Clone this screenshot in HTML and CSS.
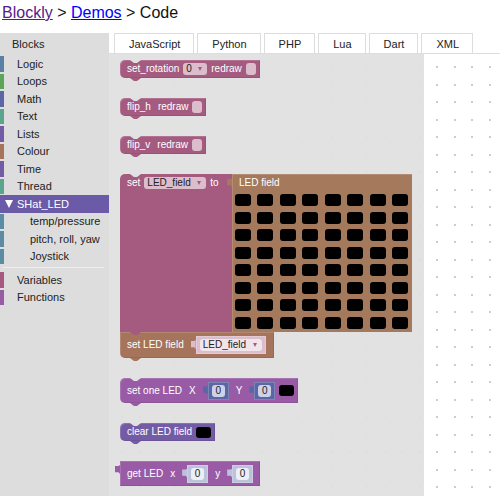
FILE: index.html
```html
<!DOCTYPE html>
<html lang="en">
<head>
<meta charset="utf-8">
<title>Blockly Code</title>
<link rel="stylesheet" href="styles.css">
</head>
<body>
<h1 class="title"><a class="visited" href="#blockly">Blockly</a> &gt; <a href="#demos">Demos</a> &gt; Code</h1>
<div class="app">
  <aside class="toolbox">
    <button class="toolbox-tab" type="button">Blocks</button>
    <ul class="categories main">
      <li class="steel">Logic</li>
      <li class="green">Loops</li>
      <li class="blue">Math</li>
      <li class="teal">Text</li>
      <li class="violet">Lists</li>
      <li class="brown">Colour</li>
      <li class="violet">Time</li>
      <li class="teal">Thread</li>
      <li class="selected"><svg class="caret" viewBox="0 0 8 8" aria-hidden="true"><path d="M0 0H8L4 8Z"/></svg>SHat_LED</li>
      <li class="child sea">temp/pressure</li>
      <li class="child sea">pitch, roll, yaw</li>
      <li class="child sea">Joystick</li>
    </ul>
    <hr class="separator">
    <ul class="categories extra">
      <li class="rose">Variables</li>
      <li class="purple">Functions</li>
    </ul>
  </aside>
  <main class="main-area">
    <nav class="tabs">
      <button type="button">JavaScript</button>
      <button type="button">Python</button>
      <button type="button">PHP</button>
      <button type="button">Lua</button>
      <button type="button">Dart</button>
      <button type="button">XML</button>
    </nav>
    <div class="workspace">
      <section class="flyout">
        <div class="block rose notch tab">
          <label for="rotation">set_rotation</label>
          <select class="field short" id="rotation"><option>0</option></select>
          <label for="redraw-rotation">redraw</label>
          <input class="check" type="checkbox" id="redraw-rotation">
        </div>
        <div class="block rose notch tab">
          <span class="name">flip_h</span>
          <label for="redraw-h">redraw</label>
          <input class="check" type="checkbox" id="redraw-h">
        </div>
        <div class="block rose notch tab">
          <span class="name">flip_v</span>
          <label for="redraw-v">redraw</label>
          <input class="check" type="checkbox" id="redraw-v">
        </div>
        <div class="stack">
          <div class="matrix-row">
            <div class="setter rose notch tab">
              <label for="set-variable">set</label>
              <select class="field wide" id="set-variable"><option>LED_field</option></select>
              <span>to</span>
            </div>
            <div class="matrix plug">
              <span class="matrix-name">LED field</span>
              <div class="leds" id="leds"></div>
            </div>
          </div>
          <div class="block tall clay tab rounded">
            <label for="field-variable">set LED field</label>
            <div class="value pink plug">
              <select class="field wide" id="field-variable"><option>LED_field</option></select>
            </div>
          </div>
        </div>
        <div class="block tall purple notch tab">
          <span class="name">set one LED</span>
          <label for="set-x">X</label>
          <div class="value blue plug"><input class="number" id="set-x" value="0"></div>
          <label class="next" for="set-y">Y</label>
          <div class="value blue plug"><input class="number" id="set-y" value="0"></div>
          <button class="swatch" type="button" aria-label="LED colour"></button>
        </div>
        <div class="block violet notch tab">
          <span>clear LED field</span>
          <button class="swatch" type="button" aria-label="Field colour"></button>
        </div>
        <div class="block tall purple output plug">
          <span class="name">get LED</span>
          <label for="get-x">x</label>
          <div class="value pale plug"><input class="number" id="get-x" value="0"></div>
          <label class="next" for="get-y">y</label>
          <div class="value pale plug"><input class="number" id="get-y" value="0"></div>
        </div>
      </section>
    </div>
  </main>
</div>
<script src="script.js"></script>
</body>
</html>
```
FILE: styles.css
```css
* { box-sizing: border-box; }

body {
  margin: 0;
  min-height: 100vh;
  display: flex;
  flex-direction: column;
  background: #fff;
  color: #222;
  font: 11px/16px "Liberation Sans", Arial, sans-serif;
}

button, input, select { font: inherit; color: inherit; margin: 0; padding: 0; border: 0; }

.title {
  margin: 0;
  padding: 3px 2px 10px;
  font-size: 16px;
  line-height: 20px;
  font-weight: 400;
  color: #111;
}
.title a { color: #00f; }
.title .visited { color: #551a8b; }

.app { flex: 1; display: flex; }

.steel { --c: #5b80a5; }
.green { --c: #5ba55b; }
.blue { --c: #5b67a5; }
.teal { --c: #5ba58c; }
.violet { --c: #745ba5; }
.brown { --c: #a5745b; }
.sea { --c: #5b8ca5; }
.rose { --c: #a55b80; }
.purple { --c: #995ba5; }
.clay { --c: #a5745b; }
.pink { --c: #dbbdcc; }
.pale { --c: #bdc2db; }

/* Toolbox */
.toolbox { flex: 0 0 109px; background: #ddd; }
.toolbox-tab {
  display: block;
  width: 100%;
  height: 22px;
  padding-left: 12px;
  background: none;
  text-align: left;
}
.categories {
  display: grid;
  grid-auto-rows: 1fr;
  margin: 0;
  padding: 0;
  list-style: none;
}
.main { height: 210px; }
.extra { height: 35px; }
.categories li {
  display: flex;
  align-items: center;
  padding-left: 17px;
  background: linear-gradient(var(--c), var(--c)) no-repeat left center / 4px calc(100% - 2px);
  white-space: nowrap;
}
.categories .child { padding-left: 30px; }
.categories .selected {
  padding-left: 5px;
  gap: 4px;
  background: #6a5aa8;
  color: #fff;
}
.caret { width: 8px; height: 8px; fill: #fff; }
.separator { margin: 2px 5px 3px 3px; border: 0; border-top: 1px solid #eee; }

/* Language tabs */
.main-area { flex: 1; min-width: 0; display: flex; flex-direction: column; }
.tabs { display: flex; gap: 3px; padding-left: 5px; border-bottom: 1px solid #ddd; }
.tabs button {
  height: 20px;
  padding: 0 13px 0 14px;
  border: 1px solid #ddd;
  border-bottom: 0;
  background: #fff;
}

/* Workspace grid dots, two per tile in each direction */
.workspace {
  flex: 1;
  background:
    radial-gradient(circle at 1px 1px, #ccc 1px, transparent 1px) 12px 12px / 35px 35px,
    radial-gradient(circle at 1px 1px, #ccc 1px, transparent 1px) 30px 12px / 35px 35px,
    radial-gradient(circle at 1px 1px, #ccc 1px, transparent 1px) 12px 30px / 35px 35px,
    radial-gradient(circle at 1px 1px, #ccc 1px, transparent 1px) 30px 30px / 35px 35px;
}
.flyout {
  width: 315px;
  min-height: 100%;
  padding: 6px 10px 10px 11px;
  display: flex;
  flex-direction: column;
  align-items: flex-start;
  gap: 20px;
  background: rgba(224, 224, 224, 0.94);
  font-size: 10px;
  color: #fff;
}

/* Blocks */
.block, .setter {
  position: relative;
  display: flex;
  align-items: center;
  gap: 4px;
  padding: 0 4px 0 7px;
  background: var(--c);
  white-space: nowrap;
}
.block { height: 18px; box-shadow: inset 1px 1px rgba(255, 255, 255, 0.15), inset -1px -1px rgba(0, 0, 0, 0.08); }
.block.tall { height: 25px; }
.block.notch { border-radius: 5px 0 0 5px; }
.block.rounded { height: 26px; padding-right: 8px; border-radius: 0 0 0 5px; }
.block.output { padding-right: 7px; }
.name { margin-right: 3px; }
.next { margin-left: 3px; }

.notch::before, .tab::after {
  content: "";
  position: absolute;
  left: 10px;
  width: 11px;
  height: 3px;
  clip-path: polygon(0 0, 100% 0, 64% 100%, 36% 100%);
}
.notch::before { top: 0; background: #e1e1e1; }
.tab::after { top: 100%; background: var(--c); z-index: 1; }

.plug { position: relative; }
.plug::before {
  content: "";
  position: absolute;
  left: -5px;
  top: 4px;
  width: 5px;
  height: 9px;
  background: var(--c);
  clip-path: polygon(0 10%, 70% 10%, 100% 0, 100% 100%, 70% 80%, 0 80%);
}

/* Fields */
.field {
  appearance: none;
  height: 12px;
  padding: 0 3px;
  border-radius: 3px;
  background: #dbbdcc url("data:image/svg+xml,%3Csvg xmlns='http://www.w3.org/2000/svg' width='4' height='4'%3E%3Cpath d='M0 0H4L2 4Z' fill='%23a55b80'/%3E%3C/svg%3E") no-repeat right 5px center;
  color: #222;
  line-height: 12px;
}
.short { width: 24px; }
.wide { width: 62px; }
.value .field { background-color: #f1e5eb; }
.check {
  appearance: none;
  width: 10px;
  height: 12px;
  border-radius: 3px;
  background: #dbbdcc;
}
.value {
  display: flex;
  align-items: center;
  justify-content: center;
  height: 18px;
  padding: 0 4px;
  margin-left: 8px;
  background: var(--c);
  box-shadow: inset 0 0 0 1px rgba(255, 255, 255, 0.2);
}
.number {
  width: 13px;
  height: 12px;
  border-radius: 3px;
  background: #ced2e6;
  color: #222;
  text-align: center;
}
.pale .number { background: #edeff7; }
.swatch { width: 15px; height: 11px; border-radius: 3px; background: #000; }

/* LED matrix */
.stack { display: flex; flex-direction: column; align-items: flex-start; }
.matrix-row { display: flex; }
.setter {
  width: 112px;
  align-items: flex-start;
  padding-top: 3px;
  line-height: 12px;
  border-radius: 5px 0 0 0;
}
.matrix {
  --c: #a5795b;
  width: 180px;
  padding: 2px 4px 3px 3px;
  background: var(--c);
  box-shadow: inset 1px 1px rgba(255, 255, 255, 0.15);
}
.matrix-name { display: block; height: 18px; padding-left: 4px; line-height: 14px; }
.leds {
  display: grid;
  grid-template-columns: repeat(8, 16px);
  grid-auto-rows: 12px;
  justify-content: space-between;
  align-content: space-between;
  height: 135px;
}
.leds button { border-radius: 3px; background: #000; }
```
FILE: script.js
```javascript
const leds = document.getElementById('leds');
for (let i = 0; i < 64; i++) {
  const cell = document.createElement('button');
  cell.type = 'button';
  cell.setAttribute('aria-label', `LED ${i + 1}`);
  leds.append(cell);
}
```
